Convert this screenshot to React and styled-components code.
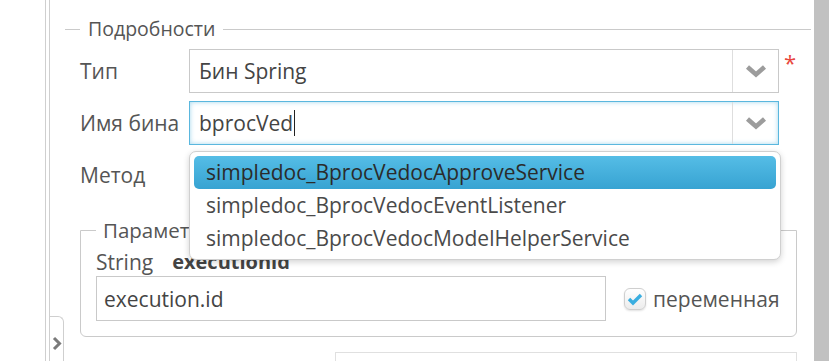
import React from 'react';
import styled, { createGlobalStyle } from 'styled-components';

const Global = createGlobalStyle`
  html, body {
    margin: 0;
    padding: 0;
    background: #fff;
    overflow: hidden;
  }
  body {
    font-family: "Open Sans", "Noto Sans", sans-serif;
    color: #4a4a4a;
  }
`;

const Page = styled.div`
  display: flex;
  height: 361px;
  width: 829px;
  overflow: hidden;
`;

const Gutter = styled.div`
  width: 45px;
  flex: none;
`;

const Rail = styled.div`
  width: 3px;
  flex: none;
  border-left: 1px solid #cfcfcf;
`;

const Side = styled.div`
  width: 15px;
  flex: none;
  display: flex;
  flex-direction: column;
`;

const SideLine = styled.div`
  flex: 1;
  border-left: 1px solid #cfcfcf;
`;

const Tab = styled.div`
  height: 45px;
  border: 1px solid #cfcfcf;
  border-bottom: 0;
  border-top-right-radius: 6px;
  display: flex;
  align-items: center;
  justify-content: center;
  padding-top: 8px;
  box-sizing: border-box;
`;

const Main = styled.div`
  flex: 1;
  min-width: 0;
`;

const Scrollbar = styled.div`
  width: 15px;
  flex: none;
  background: #c1c1c1;
`;

const Fieldset = styled.fieldset`
  margin: 15px 3px 0 1px;
  padding: 6px 0 0 15px;
  border: 0;
  border-top: 1px solid #cacaca;
  min-width: 0;
`;

const Legend = styled.legend`
  margin-left: 0;
  padding: 0 8px;
  font-size: 19.5px;
  line-height: 28px;
  color: #555;
`;

const Row = styled.div`
  display: flex;
  align-items: center;
  height: 44px;
  margin-bottom: ${p => p.$gap ?? 8}px;
  position: relative;
`;

const Label = styled.div`
  width: 109px;
  flex: none;
  font-size: 21px;
  color: #555;
`;

const Field = styled.div`
  position: relative;
  width: 590px;
  height: 44px;
  box-sizing: border-box;
  display: flex;
  align-items: center;
  border: 1px solid ${p => (p.$focused ? '#5ab7de' : '#c9c9c9')};
  box-shadow: ${p => (p.$focused ? 'inset 0 0 5px rgba(90, 183, 222, 0.55)' : 'none')};
  background: #fff;
`;

const FieldText = styled.div`
  flex: 1;
  padding-left: 9px;
  font-size: 21px;
  color: #444;
  display: flex;
  align-items: center;
`;

const Caret = styled.span`
  display: inline-block;
  width: 0;
  height: 26px;
  border-left: 1px solid #222;
  margin-left: 1px;
`;

const Arrow = styled.div`
  width: 45px;
  height: 42px;
  flex: none;
  border-left: 1px solid #dedede;
  display: flex;
  align-items: center;
  justify-content: center;
`;

const Required = styled.span`
  align-self: flex-start;
  margin: 2px 0 0 5px;
  color: #e8473e;
  font-size: 22px;
  line-height: 22px;
`;

const Dropdown = styled.ul`
  position: absolute;
  top: 50px;
  left: 109px;
  width: 592px;
  margin: 0;
  padding: 4px;
  box-sizing: border-box;
  list-style: none;
  background: #fff;
  border: 1px solid #d0d0d0;
  border-radius: 7px;
  box-shadow: 0 2px 6px rgba(0, 0, 0, 0.18);
  z-index: 10;
`;

const Option = styled.li`
  height: 33px;
  line-height: 32px;
  padding-left: 12px;
  font-size: 21px;
  color: ${p => (p.$active ? '#2b2b2b' : '#4a4a4a')};
  border-radius: 5px;
  background: ${p => (p.$active ? 'linear-gradient(#55bde6, #37a3d2)' : 'transparent')};
`;

const SubFieldset = styled.fieldset`
  margin: 19px 14px 0 0;
  padding: 4px 15px 15px 15px;
  border: 1px solid #cacaca;
  border-radius: 0 0 6px 6px;
  min-width: 0;
`;

const SubLegend = styled(Legend)`
  padding: 0 8px 0 7px;
  font-size: 20.5px;
`;

const ParamHead = styled.div`
  font-size: 21px;
  line-height: 28px;
  color: #555;
  display: flex;
  gap: 19px;
`;

const ParamName = styled.span`
  font-size: 20px;
  font-weight: 700;
  color: #444;
`;

const ParamRow = styled.div`
  display: flex;
  align-items: center;
`;

const TextInput = styled.div`
  width: 510px;
  height: 45px;
  box-sizing: border-box;
  border: 1px solid #c9c9c9;
  padding-left: 7px;
  display: flex;
  align-items: center;
  font-size: 21px;
  color: #444;
`;

const Check = styled.span`
  width: 22px;
  height: 22px;
  box-sizing: border-box;
  margin-left: 18px;
  border: 1px solid #cfcfcf;
  border-radius: 6px;
  background: linear-gradient(#ffffff, #ececec);
  box-shadow: 0 1px 2px rgba(0, 0, 0, 0.12);
  display: flex;
  align-items: center;
  justify-content: center;
`;

const CheckLabel = styled.span`
  margin-left: 7px;
  font-size: 21px;
  color: #555;
`;

const BottomBox = styled.div`
  margin: 15px 14px 0 255px;
  height: 30px;
  border: 1px solid #e0e0e0;
  border-bottom: 0;
`;

const Chevron = () => (
  <svg width="22" height="14" viewBox="0 0 22 14">
    <polyline points="2.5,3 11,10.5 19.5,3" fill="none" stroke="#9c9c9c" strokeWidth="4.6" />
  </svg>
);

const SideChevron = () => (
  <svg width="10" height="15" viewBox="0 0 10 15">
    <polyline points="2,2 7.5,7.5 2,13" fill="none" stroke="#7a7a7a" strokeWidth="3" />
  </svg>
);

const Tick = () => (
  <svg width="16" height="14" viewBox="0 0 16 14">
    <polyline points="2,7 6,11 14,3" fill="none" stroke="#3aaee0" strokeWidth="3.4" />
  </svg>
);

const beans = [
  'simpledoc_BprocVedocApproveService',
  'simpledoc_BprocVedocEventListener',
  'simpledoc_BprocVedocModelHelperService'
];

export default function App() {
  return (
    <Page>
      <Global />
      <Gutter />
      <Rail />
      <Side>
        <SideLine />
        <Tab>
          <SideChevron />
        </Tab>
      </Side>
      <Main>
        <Fieldset>
          <Legend>Подробности</Legend>
          <Row>
            <Label>Тип</Label>
            <Field>
              <FieldText>Бин Spring</FieldText>
              <Arrow>
                <Chevron />
              </Arrow>
            </Field>
            <Required>*</Required>
          </Row>
          <Row>
            <Label>Имя бина</Label>
            <Field $focused>
              <FieldText>
                bprocVed
                <Caret />
              </FieldText>
              <Arrow>
                <Chevron />
              </Arrow>
            </Field>
            <Dropdown>
              {beans.map((b, i) => (
                <Option key={b} $active={i === 0}>
                  {b}
                </Option>
              ))}
            </Dropdown>
          </Row>
          <Row $gap={0}>
            <Label>Метод</Label>
          </Row>
          <SubFieldset>
            <SubLegend>Параметры</SubLegend>
            <ParamHead>
              <span>String</span>
              <ParamName>executionid</ParamName>
            </ParamHead>
            <ParamRow>
              <TextInput>execution.id</TextInput>
              <Check>
                <Tick />
              </Check>
              <CheckLabel>переменная</CheckLabel>
            </ParamRow>
          </SubFieldset>
          <BottomBox />
        </Fieldset>
      </Main>
      <Scrollbar />
    </Page>
  );
}
